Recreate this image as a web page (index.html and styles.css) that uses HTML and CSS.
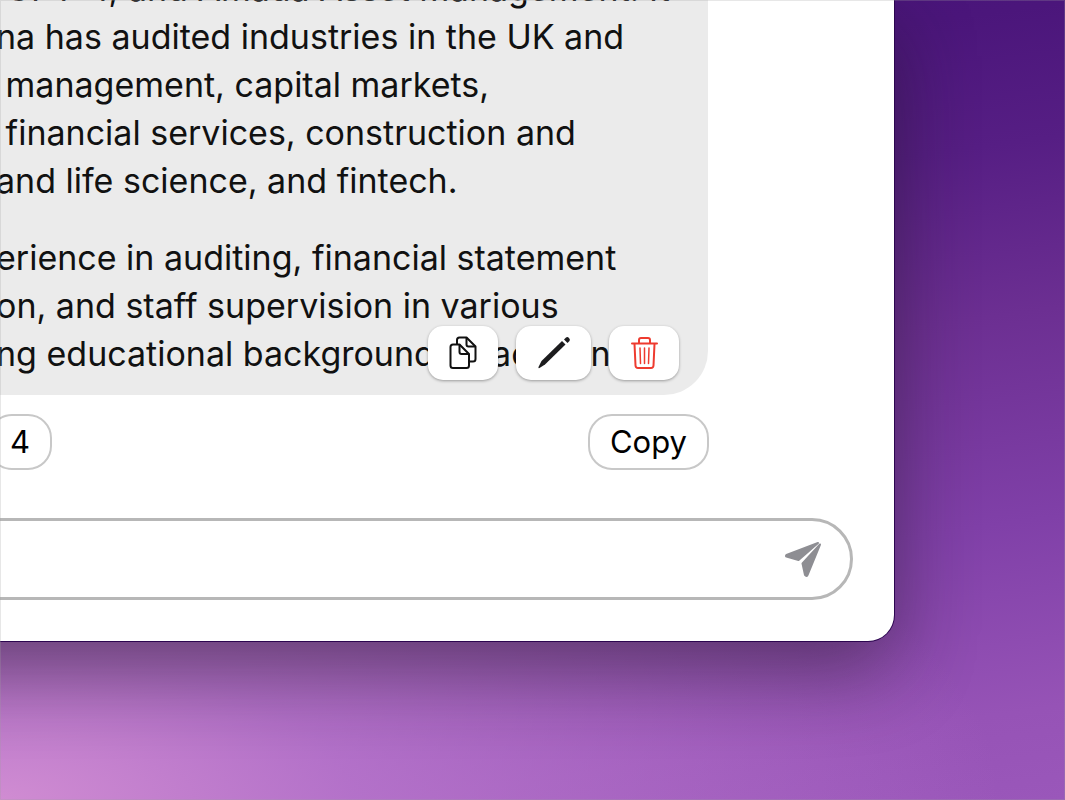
FILE: index.html
```
<!DOCTYPE html>
<html lang="en">
<head>
    <meta charset="utf-8">
    <title>Chat</title>
    <link rel="stylesheet" href="styles.css">
</head>
<body>
    <main class="window">
        <section class="messages">
            <div class="bubble">
                <p>&nbsp;GPT-4, and Amada Asset Management. It<br>na has audited industries in the UK and<br>&nbsp;management, capital markets,<br>&nbsp;financial services, construction and<br>and life science, and fintech.</p>
                <p>erience in auditing, financial statement<br>on, and staff supervision in various<br>ng educational background, in account</p>
                <div class="actions">
                    <button type="button" class="action" aria-label="Duplicate">
                        <svg width="30" height="36" viewBox="0 0 30 36" fill="none" stroke="#111" stroke-width="2" stroke-linejoin="round">
                            <path d="M9 9V5Q9 2.500 11.500 2.500H18.500L27.500 11.500V24Q27.500 26.500 25 26.500H21"/>
                            <path d="M18.500 2.500V9.500Q18.500 11.500 20.500 11.500H27.500"/>
                            <path d="M5 9.500H11.500L21 19V30.500Q21 33 18.500 33H5Q2.500 33 2.500 30.500V12Q2.500 9.500 5 9.500Z" fill="#fff"/>
                            <path d="M11.500 9.500V17Q11.500 19 13.500 19H21"/>
                        </svg>
                    </button>
                    <button type="button" class="action action-wide" aria-label="Edit">
                        <svg width="36" height="36" viewBox="0 0 36 36" fill="#1c1c1e">
                            <path d="M3.500 33Q2 33.500 2.500 32L5.500 26L26 6L29.500 9.500L9 29.500Z"/>
                            <path d="M28 4.500L30 2.500Q31.500 1.500 33 3Q34.500 4.500 33.500 6L31.500 8Z"/>
                        </svg>
                    </button>
                    <button type="button" class="action" aria-label="Delete">
                        <svg width="30" height="36" viewBox="0 0 30 36" fill="none" stroke="#ee3b2f" stroke-width="2" stroke-linecap="round" stroke-linejoin="round">
                            <path d="M3 8.500H28M10 8V5Q10 3 12 3H19Q21 3 21 5V8"/>
                            <path d="M5.500 9L6.500 30.500Q6.700 33 9 33H22Q24.300 33 24.500 30.500L25.500 9"/>
                            <path d="M11 13L11.500 28.500M15.500 13V28.500M20 13L19.500 28.500" stroke-width="1.500"/>
                        </svg>
                    </button>
                </div>
            </div>
        </section>
        <div class="toolbar">
            <button type="button" class="pill">4</button>
            <button type="button" class="pill">Copy</button>
        </div>
        <form class="composer">
            <input type="text" class="composer-input" aria-label="Message">
            <button type="button" class="send" aria-label="Send">
                <svg width="38" height="38" viewBox="0 0 38 38" fill="#8e8e93" stroke="#8e8e93" stroke-width="2" stroke-linejoin="round">
                    <path d="M34 3L2.500 15Q1.500 16 2.500 16.500L14.500 20Z"/>
                    <path d="M36 4.500L18.500 23.500L21 35Q22.500 37 23.500 35Z"/>
                </svg>
            </button>
        </form>
    </main>
</body>
</html>
```
FILE: styles.css
```
* {
    box-sizing: border-box;
}
body {
    margin: 0;
    min-height: 100vh;
    overflow: hidden;
    font-family: Inter, "Liberation Sans", sans-serif;
    color: #000;
    background:
        radial-gradient(ellipse 1000px 420px at 0 100%, #d08cd2 0%, rgba(190, 124, 208, 0.75) 35%, rgba(170, 100, 200, 0) 100%),
        linear-gradient(172deg, #45127a 0%, #4b167b 16%, #561e84 30%, #6c2f92 48%, #8040a8 70%, #9653b6 90%, #9a57ba 100%);
}
/* hairline around the whole desktop */
body::after {
    content: "";
    position: fixed;
    inset: 0;
    border: 1px solid rgba(160, 160, 160, 0.25);
    pointer-events: none;
}
.window {
    display: flex;
    flex-direction: column;
    height: calc(100vh - 159px);
    margin: 0 171px 0 -120px;
    padding: 0 0 41px 120px;
    background: #fff;
    border-bottom-right-radius: 26px;
    box-shadow: 0 0 0 1px #2c0650, 0 30px 80px rgba(30, 20, 30, 0.48);
}
.messages {
    display: flex;
    flex: 1;
    flex-direction: column;
    justify-content: flex-end;
    min-height: 0;
    overflow: hidden;
    margin-right: 186px;
}
.bubble {
    position: relative;
    padding-bottom: 17px;
    background: #ebebeb;
    border-bottom-right-radius: 44px;
    font-size: 34px;
    line-height: 48px;
    white-space: nowrap;
    color: #111;
}
.bubble p {
    margin: 0 0 29px -4px;
}
.bubble p:nth-child(2) {
    margin-bottom: 0;
}
.actions {
    position: absolute;
    right: 29px;
    bottom: 15px;
    display: flex;
    gap: 18px;
}
.action {
    display: flex;
    align-items: center;
    justify-content: center;
    width: 70px;
    height: 54px;
    padding: 0;
    background: #fff;
    border: 0;
    border-radius: 15px;
    box-shadow: 0 1px 3px rgba(0, 0, 0, 0.35);
}
.action-wide {
    width: 75px;
}
.toolbar {
    display: flex;
    justify-content: space-between;
    margin: 19px 185px 0 -12px;
}
.pill {
    height: 56px;
    padding: 0 20px 2px;
    background: #fff;
    border: 2px solid #c8c8c8;
    border-radius: 24px;
    font-family: inherit;
    font-size: 31px;
    color: #000;
}
.composer {
    display: flex;
    align-items: center;
    height: 82px;
    margin: 48px 41px 0 -42px;
    padding: 0 28px 0 60px;
    border: 3px solid #b7b7b7;
    border-radius: 41px;
}
.composer-input {
    flex: 1;
    min-width: 0;
    border: 0;
    outline: 0;
    background: none;
    font: inherit;
    font-size: 32px;
}
.send {
    display: flex;
    padding: 0;
    background: none;
    border: 0;
}
```
